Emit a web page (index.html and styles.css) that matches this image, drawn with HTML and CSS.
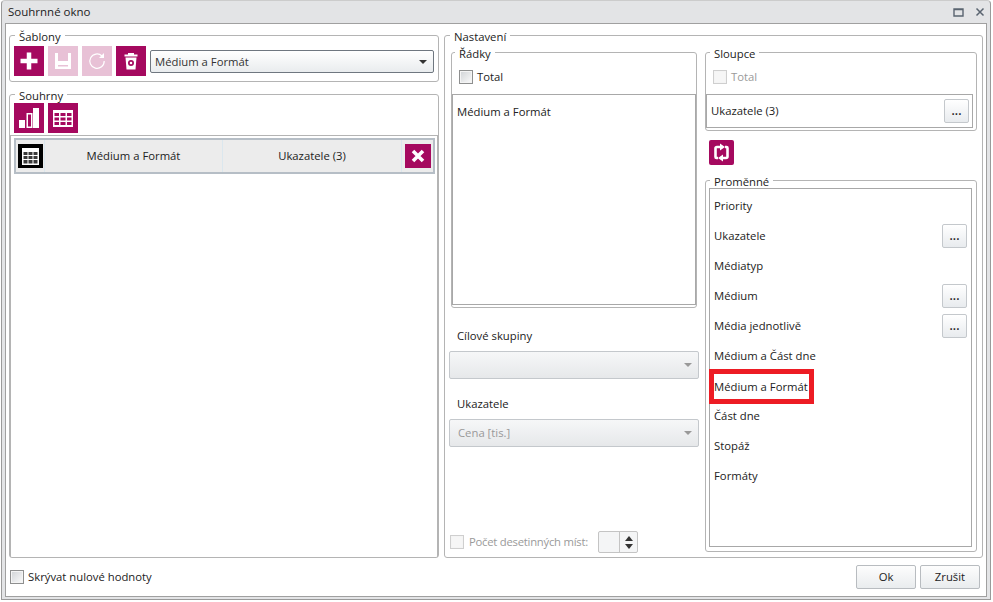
FILE: index.html
```html
<!DOCTYPE html>
<html lang="cs">
<head>
    <meta charset="UTF-8">
    <title>Souhrnné okno</title>
    <link rel="stylesheet" href="styles.css">
</head>
<body>
    <div class="window">
        <header class="titlebar">
            <span>Souhrnné okno</span>
            <div class="window-buttons">
                <svg width="11" height="9" viewBox="0 0 11 9"><path d="M1 1h9v7H1z M1 1.500h9" fill="none" stroke="#5a6470" stroke-width="1.400"/></svg>
                <svg width="10" height="10" viewBox="0 0 10 10"><path d="M1.500 1.500l7 7M8.500 1.500l-7 7" fill="none" stroke="#5a6470" stroke-width="1.500"/></svg>
            </div>
        </header>
        <div class="content">
            <div class="columns">
                <div class="left">
                    <fieldset class="group sablony">
                        <legend>Šablony</legend>
                        <div class="toolbar">
                            <button class="tile">
                                <svg width="20" height="20" viewBox="0 0 20 20"><path d="M10 1.500v17M1.500 10h17" stroke="#fff" stroke-width="4.500"/></svg>
                            </button>
                            <button class="tile off">
                                <svg width="18" height="18" viewBox="0 0 18 18"><path fill-rule="evenodd" d="M1 1h3v8h10V1h3v16H1z M4 13v1.500h10V13z" fill="#fff"/></svg>
                            </button>
                            <button class="tile off">
                                <svg width="20" height="20" viewBox="0 0 20 20"><path d="M15 5A7.200 7.200 0 1 0 17.200 10" fill="none" stroke="#fff" stroke-width="1.200"/><path d="M17 2v5h-5z" fill="#fff"/></svg>
                            </button>
                            <button class="tile">
                                <svg width="14" height="18" viewBox="0 0 14 18"><path fill-rule="evenodd" d="M0.500 2.500h3.500V1h6v1.500h3.500v2H0.500z M1.500 5.500h11l-1 12h-9z M7 8a3 3 0 1 0 0 6a3 3 0 0 0 0-6z M7 9.700a1.300 1.300 0 1 1 0 2.600a1.300 1.300 0 0 1 0-2.600z" fill="#fff"/></svg>
                            </button>
                            <div class="select">
                                <span>Médium a Formát</span>
                                <i class="arrow"></i>
                            </div>
                        </div>
                    </fieldset>
                    <fieldset class="group souhrny">
                        <legend>Souhrny</legend>
                        <div class="toolbar small">
                            <button class="tile">
                                <svg width="20" height="20" viewBox="0 0 20 20"><path fill-rule="evenodd" d="M0 12h6v8H0z M7.500 5h6v15h-6z M9 6.500v12h3v-12z M14 0h6v20h-6z" fill="#fff"/></svg>
                            </button>
                            <button class="tile">
                                <svg width="20" height="17" viewBox="0 0 20 17"><path fill-rule="evenodd" d="M0 0h20v17H0z M1.500 3v3h4.500V3z M7.500 3v3h5V3z M14 3v3h4.500V3z M1.500 7.500v3h4.500v-3z M7.500 7.500v3h5v-3z M14 7.500v3h4.500v-3z M1.500 12v3h4.500v-3z M7.500 12v3h5v-3z M14 12v3h4.500v-3z" fill="#fff"/></svg>
                            </button>
                        </div>
                        <div class="summary-list">
                            <div class="summary-row">
                                <div class="grid-icon">
                                    <svg width="17" height="17" viewBox="0 0 17 17"><path d="M0 0h17v17H0z" fill="#fff"/><path d="M1.500 4h4v3h-4z M6.500 4h4v3h-4z M11.500 4h4v3h-4z M1.500 8h4v3h-4z M6.500 8h4v3h-4z M11.500 8h4v3h-4z M1.500 12h4v3.500h-4z M6.500 12h4v3.500h-4z M11.500 12h4v3.500h-4z" fill="#3a3a3a"/></svg>
                                </div>
                                <div class="cell rows-cell">Médium a Formát</div>
                                <div class="cell cols-cell">Ukazatele (3)</div>
                                <button class="remove">
                                    <svg width="14" height="14" viewBox="0 0 14 14"><path d="M2 2l10 10M12 2L2 12" stroke="#fff" stroke-width="3.600"/></svg>
                                </button>
                            </div>
                        </div>
                    </fieldset>
                </div>

                <fieldset class="group nastaveni">
                    <legend>Nastavení</legend>
                    <div class="settings">
                        <div class="settings-left">
                            <fieldset class="group radky">
                                <legend>Řádky</legend>
                                <label class="check"><i class="box"></i>Total</label>
                                <div class="list rows-list">
                                    <div class="list-text">Médium a Formát</div>
                                </div>
                            </fieldset>
                            <div class="field field-first">Cílové skupiny</div>
                            <div class="select disabled"><span></span><i class="arrow"></i></div>
                            <div class="field">Ukazatele</div>
                            <div class="select disabled"><span>Cena [tis.]</span><i class="arrow"></i></div>
                            <div class="decimals">
                                <label class="check off"><i class="box"></i>Počet desetinných míst:</label>
                                <div class="spinner">
                                    <div class="spin-value"></div>
                                    <div class="spin-buttons">
                                        <i class="up"></i>
                                        <i class="down"></i>
                                    </div>
                                </div>
                            </div>
                        </div>
                        <div class="settings-right">
                            <fieldset class="group sloupce">
                                <legend>Sloupce</legend>
                                <label class="check off"><i class="box"></i>Total</label>
                                <div class="list cols-list">
                                    <span>Ukazatele (3)</span>
                                    <button class="dots">...</button>
                                </div>
                            </fieldset>
                            <button class="swap">
                                <svg width="19" height="19" viewBox="0 0 19 19"><path d="M8 4H5q-1.500 0-1.500 1.500V14q0 1 1 1H6M11 15h3q1.500 0 1.500-1.500V5q0-1-1-1H13" fill="none" stroke="#fff" stroke-width="2.600"/><path d="M8 0.500l5 3.500-5 3.500z M11 11.500l-5 3.500 5 3.500z" fill="#fff"/></svg>
                            </button>
                            <fieldset class="group promenne">
                                <legend>Proměnné</legend>
                                <div class="list vars-list">
                                    <div class="var"><span>Priority</span></div>
                                    <div class="var"><span>Ukazatele</span><button class="dots">...</button></div>
                                    <div class="var"><span>Médiatyp</span></div>
                                    <div class="var"><span>Médium</span><button class="dots">...</button></div>
                                    <div class="var"><span>Média jednotlivě</span><button class="dots">...</button></div>
                                    <div class="var"><span>Médium a Část dne</span></div>
                                    <div class="var"><span class="marked">Médium a Formát</span></div>
                                    <div class="var"><span>Část dne</span></div>
                                    <div class="var"><span>Stopáž</span></div>
                                    <div class="var"><span>Formáty</span></div>
                                </div>
                            </fieldset>
                        </div>
                    </div>
                </fieldset>
            </div>
            <footer class="actions">
                <label class="check"><i class="box"></i>Skrývat nulové hodnoty</label>
                <div class="action-buttons">
                    <button class="btn">Ok</button>
                    <button class="btn">Zrušit</button>
                </div>
            </footer>
        </div>
    </div>
</body>
</html>
```

FILE: styles.css
```css
* {
    padding: 0;
    margin: 0;
    box-sizing: border-box;
}

html, body {
    height: 100%;
    overflow: hidden;
}

body {
    background: #fff;
    font-family: "Open Sans", "Noto Sans", sans-serif;
    font-size: 11.3px;
    line-height: 16px;
    color: #222;
}

button {
    font: inherit;
    color: inherit;
    display: flex;
    align-items: center;
    justify-content: center;
}

.window {
    width: 990px;
    height: 600px;
    margin-left: 1px;
    background: #e3e4e6;
    border: 1px solid #9a9a9a;
    border-top-color: #ccc;
    border-radius: 4px 4px 0 0;
    padding: 0 3px 2px 3px;
    display: flex;
    flex-direction: column;
}

.titlebar {
    height: 22px;
    flex: none;
    padding-left: 3px;
    font-size: 11.5px;
    display: flex;
    align-items: center;
    justify-content: space-between;
}

.window-buttons {
    display: flex;
    align-items: center;
    gap: 11px;
    padding-right: 2px;
}

.content {
    flex: 1;
    background: #fff;
    border: 1px solid #a0a0a0;
    padding: 3px;
    display: flex;
    flex-direction: column;
}

.columns {
    display: flex;
    gap: 5px;
    height: 531px;
}

.left {
    width: 430px;
    display: flex;
    flex-direction: column;
    gap: 4px;
}

.group {
    border: 1px solid #b4b4b4;
    border-radius: 3px;
    min-width: 0;
}

.group > legend {
    padding: 0 4px;
    height: 16px;
    line-height: 19px;
}

/* templates */
.sablony {
    height: 55px;
    padding: 3px 3px 0 4px;
}

.sablony > legend,
.nastaveni > legend,
.promenne > legend {
    margin-left: 1px;
}

.toolbar {
    display: flex;
    gap: 4px;
    align-items: flex-start;
}

.tile {
    width: 30px;
    height: 30px;
    background: #a5095f;
    border: 0;
}

.tile.off {
    background: #e8c1d6;
}

.select {
    height: 28px;
    border: 1px solid #c4c8cc;
    border-radius: 2px;
    background: linear-gradient(#f6f7f8, #e6e8ea);
    display: flex;
    align-items: center;
    justify-content: space-between;
    padding: 0 6px 0 4px;
    color: #333;
    flex: none;
}

.toolbar .select {
    flex: 1;
    height: 23px;
    margin: 4px 1px 0 0;
    border-color: #6f7780;
    background: linear-gradient(#fff, #e9ecee);
}

.arrow {
    width: 0;
    height: 0;
    border-left: 4px solid transparent;
    border-right: 4px solid transparent;
    border-top: 4px solid #333;
}

.select.disabled {
    color: #999;
    padding-left: 8px;
}

.select.disabled .arrow {
    border-top-color: #999;
}

/* summaries */
.souhrny {
    flex: 1;
    display: flex;
    flex-direction: column;
}

.souhrny > legend {
    margin-left: 5px;
}

.toolbar.small {
    padding-left: 4px;
    margin-top: 1px;
    height: 32px;
}

.summary-list {
    flex: 1;
    border-top: 1px solid #b4b4b4;
    border-left: 1px solid #b4b4b4;
    border-right: 1px solid #b4b4b4;
    padding: 2px 2px 0 3px;
}

.summary-row {
    height: 36px;
    border: 2px solid #b6bec6;
    background: #ececec;
    display: flex;
    align-items: center;
    padding: 0 2px;
}

.grid-icon {
    width: 25px;
    height: 24px;
    background: #000;
    display: flex;
    align-items: center;
    justify-content: center;
    flex: none;
}

.cell {
    text-align: center;
    height: 100%;
    line-height: 32px;
    border-left: 1px solid #dbe7ee;
}

.rows-cell {
    width: 178px;
    margin-left: 1px;
}

.cols-cell {
    width: 180px;
    border-right: 1px solid #dbe7ee;
}

.remove {
    width: 26px;
    height: 24px;
    background: #a5095f;
    border: 0;
    margin-left: 3px;
}

/* settings */
.nastaveni {
    width: 539px;
    padding: 1px 5px 4px 4px;
}

.settings {
    display: flex;
    gap: 6px;
    height: 100%;
}

.settings-left {
    width: 250px;
    display: flex;
    flex-direction: column;
}

.settings-right {
    width: 272px;
    display: flex;
    flex-direction: column;
}

.radky {
    height: 264px;
    margin: 0 2px 20px;
    flex: none;
}

.radky > legend {
    margin-left: 3px;
}

.check {
    display: flex;
    align-items: center;
    gap: 4px;
}

.box {
    width: 14px;
    height: 14px;
    flex: none;
    border: 1px solid #8e8f8f;
    background: linear-gradient(135deg, #d0d3d6, #fbfbfb);
    box-shadow: inset 0 0 0 1px #f4f4f4;
}

.check.off {
    color: #9a9a9a;
}

.check.off .box {
    border-color: #cfcfcf;
    background: #f6f6f6;
}

.group > .check {
    height: 34px;
    padding-left: 7px;
}

.list {
    border: 1px solid #a8a8a8;
}

.rows-list {
    height: 211px;
}

.list-text {
    padding: 9px 4px;
}

.field {
    padding: 0 8px;
    height: 23px;
    margin-top: 17px;
    flex: none;
}

.field-first {
    margin-top: 0;
}

.decimals {
    margin-top: auto;
    margin-left: 1px;
    display: flex;
    align-items: center;
    gap: 5px;
}

.decimals .check {
    width: 143px;
    gap: 5px;
    white-space: nowrap;
    letter-spacing: -0.25px;
}

.spinner {
    width: 40px;
    height: 22px;
    display: flex;
    border: 1px solid #c4c4c4;
    border-radius: 2px;
    background: #f4f5f6;
}

.spin-value {
    flex: 1;
    border-right: 1px solid #c4c4c4;
}

.spin-buttons {
    width: 17px;
    display: flex;
    flex-direction: column;
    align-items: center;
    justify-content: space-around;
    padding: 2px 0;
}

.up, .down {
    width: 0;
    height: 0;
    border-left: 4px solid transparent;
    border-right: 4px solid transparent;
}

.up {
    border-bottom: 5px solid #333;
}

.down {
    border-top: 5px solid #333;
}

.sloupce {
    height: 87px;
    padding-right: 3px;
    flex: none;
}

.sloupce > legend {
    margin-left: 4px;
}

.cols-list {
    height: 34px;
    display: flex;
    align-items: center;
    justify-content: space-between;
    padding: 0 3px 0 4px;
}

.dots {
    width: 25px;
    height: 24px;
    border: 1px solid #c4c8cc;
    border-radius: 2px;
    background: linear-gradient(#fff, #e8ebee);
    font-size: 12px;
    font-weight: 600;
}

.swap {
    width: 25px;
    height: 25px;
    margin: 9px 0 0 4px;
    border: 0;
    border-radius: 2px;
    background: #a5095f;
    flex: none;
}

.promenne {
    flex: 1;
    margin: 7px 0 1px;
    padding: 0 4px 4px 3px;
}

.vars-list {
    height: 100%;
    padding: 2px 4px;
}

.var {
    height: 30px;
    display: flex;
    align-items: center;
    justify-content: space-between;
}

.marked {
    display: inline-block;
    min-width: 95px;
    height: 25px;
    line-height: 25px;
    outline: 5px solid #ed1c24;
}

.actions {
    flex: 1;
    display: flex;
    align-items: center;
    justify-content: space-between;
    padding: 3px 3px 0 1px;
}

.action-buttons {
    display: flex;
    gap: 4px;
}

.btn {
    width: 60px;
    height: 24px;
    border: 1px solid #b8bcc0;
    border-radius: 2px;
    background: linear-gradient(#fdfdfd, #e9ecee);
}
```
